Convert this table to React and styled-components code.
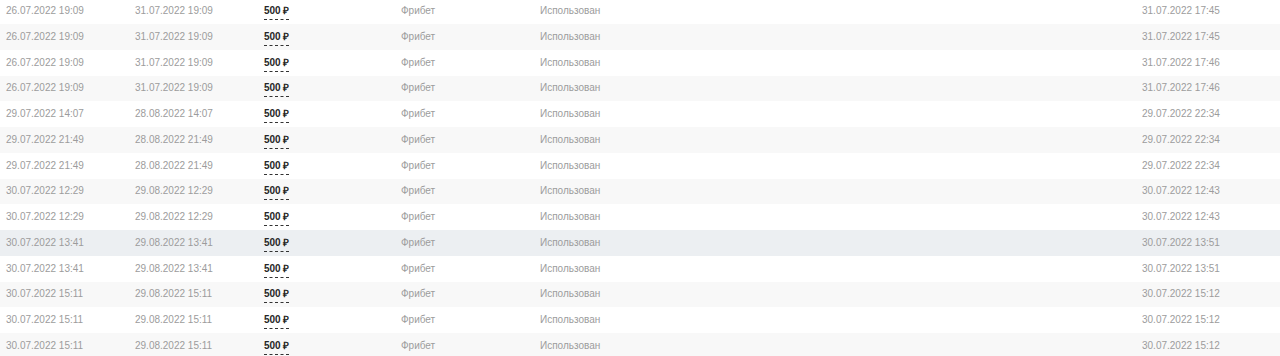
import React from 'react';
import styled, { createGlobalStyle } from 'styled-components';

const rows = [
  ['26.07.2022 19:09', '31.07.2022 19:09', '31.07.2022 17:45'],
  ['26.07.2022 19:09', '31.07.2022 19:09', '31.07.2022 17:45'],
  ['26.07.2022 19:09', '31.07.2022 19:09', '31.07.2022 17:46'],
  ['26.07.2022 19:09', '31.07.2022 19:09', '31.07.2022 17:46'],
  ['29.07.2022 14:07', '28.08.2022 14:07', '29.07.2022 22:34'],
  ['29.07.2022 21:49', '28.08.2022 21:49', '29.07.2022 22:34'],
  ['29.07.2022 21:49', '28.08.2022 21:49', '29.07.2022 22:34'],
  ['30.07.2022 12:29', '29.08.2022 12:29', '30.07.2022 12:43'],
  ['30.07.2022 12:29', '29.08.2022 12:29', '30.07.2022 12:43'],
  ['30.07.2022 13:41', '29.08.2022 13:41', '30.07.2022 13:51'],
  ['30.07.2022 13:41', '29.08.2022 13:41', '30.07.2022 13:51'],
  ['30.07.2022 15:11', '29.08.2022 15:11', '30.07.2022 15:12'],
  ['30.07.2022 15:11', '29.08.2022 15:11', '30.07.2022 15:12'],
  ['30.07.2022 15:11', '29.08.2022 15:11', '30.07.2022 15:12'],
];

// строка под курсором в исходном скриншоте
const HOVER_ROW = 9;

export default function App() {
  return (
    <>
      <GlobalStyle />
      <Table>
        {rows.map(([created, expires, used], i) => (
          <Row key={i} $striped={i % 2 === 1} $hover={i === HOVER_ROW}>
            <Cell>{created}</Cell>
            <Cell>{expires}</Cell>
            <Cell>
              <Amount>500 ₽</Amount>
            </Cell>
            <Cell>Фрибет</Cell>
            <Cell>Использован</Cell>
            <Cell>{used}</Cell>
          </Row>
        ))}
      </Table>
    </>
  );
}

const GlobalStyle = createGlobalStyle`
  html, body {
    margin: 0;
    padding: 0;
    background: #fff;
    overflow: hidden;
  }
  body {
    font-family: "Liberation Sans", Arial, sans-serif;
  }
`;

const Table = styled.div`
  margin-top: -1.75px;
  width: 1280px;
`;

const Row = styled.div`
  display: grid;
  grid-template-columns: 129px 129px 137px 139px 602px 1fr;
  height: 25.75px;
  align-items: center;
  background: ${props => (props.$hover ? '#eceff2' : props.$striped ? '#f8f8f8' : '#fff')};
`;

const Cell = styled.div`
  padding-left: 6px;
  font-size: 10px;
  line-height: 12px;
  color: #9c9c9c;
  white-space: nowrap;
`;

const Amount = styled.span`
  display: inline-block;
  margin-top: 3px;
  padding-bottom: 2px;
  font-weight: bold;
  color: #262626;
  border-bottom: 1px dashed #333;
`;
